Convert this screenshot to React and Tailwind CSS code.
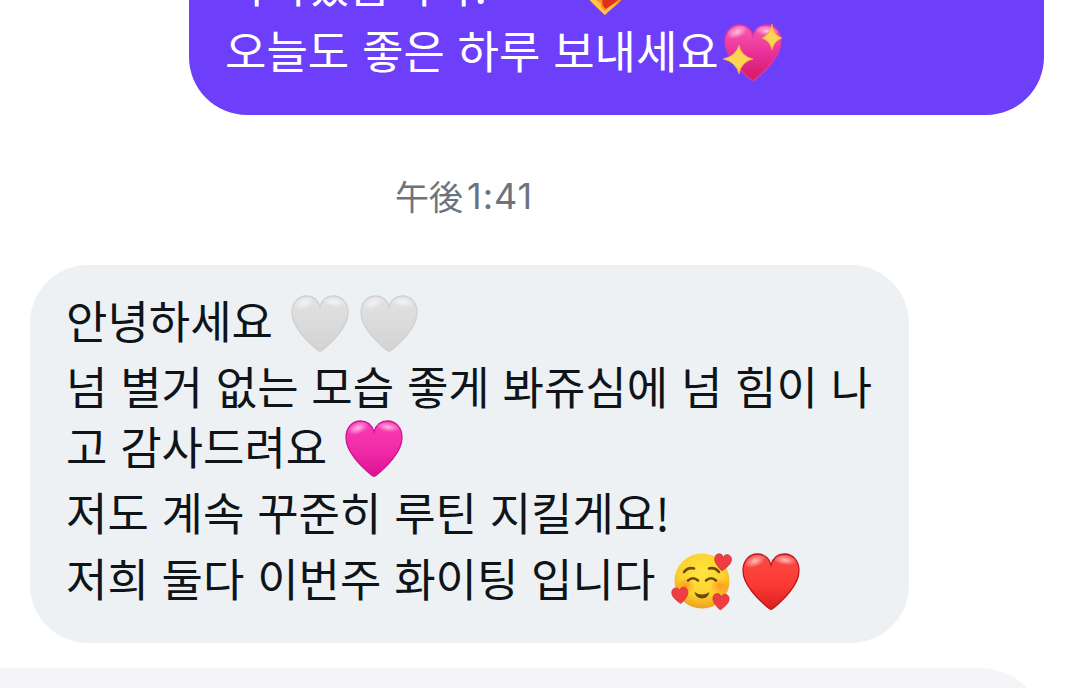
import React from 'react';

const HEART = "M29 56.5C27.5 56 17 47.5 10 38.5C4 31 1 25 1 17.5C1 8 7 1 15.5 1C22 1 27 5 29 12C31 5 36 1 42.5 1C51 1 57 8 57 17.5C57 25 54 31 48 38.5C41 47.5 30.5 56 29 56.5Z";

const HEART_COLORS = {
  white: { light: '#e2e2e3', base: '#dadadb', bottom: '#d3d3d4', edge: '#d0d0d2' },
  pink: { light: '#fb3cb4', base: '#f02aa6', bottom: '#dc0f94', edge: '#cf1592' },
  red: { light: '#fb4a42', base: '#fb3a34', bottom: '#dc1f22', edge: '#bd171d' },
  sparkle: { light: '#fb5cb0', base: '#e82c98', bottom: '#d21a5c', edge: '#e0389a' },
};

function Heart({ color, className, children }) {
  const c = HEART_COLORS[color];
  return (
    <svg viewBox="0 0 58 58" className={className || "w-[58px] h-[58px] shrink-0"}>
      <defs>
        <linearGradient id={`fill-${color}`} x1="0" y1="0" x2="0" y2="1">
          <stop offset="0" stopColor={c.light} />
          <stop offset="0.55" stopColor={c.base} />
          <stop offset="1" stopColor={c.bottom} />
        </linearGradient>
        <radialGradient id={`gloss-${color}`}>
          <stop offset="0" stopColor="#fff" stopOpacity="0.65" />
          <stop offset="1" stopColor="#fff" stopOpacity="0" />
        </radialGradient>
      </defs>
      <path d={HEART} fill={`url(#fill-${color})`} stroke={c.edge} strokeWidth="1.3" />
      <ellipse cx="13" cy="8" rx="11" ry="6" transform="rotate(-22 13 8)" fill={`url(#gloss-${color})`} />
      <ellipse cx="43" cy="7" rx="12" ry="5" transform="rotate(8 43 7)" fill={`url(#gloss-${color})`} />
      {children}
    </svg>
  );
}

function SparklingHeart() {
  return (
    <Heart color="sparkle" className="w-[58px] h-[58px] shrink-0 overflow-visible">
      <path d="M15 21Q17 32 29 35Q17 38 15 50Q12 38 -1 35Q12 32 15 21Z" fill="#fdd552" stroke="#f2a23c" strokeWidth="0.8" />
      <path d="M48 0Q49 11 58 14Q50 17 48 26Q46 17 38 14Q46 11 48 0Z" fill="#fdd552" stroke="#f2a23c" strokeWidth="0.8" />
    </Heart>
  );
}

function FireHeart() {
  return (
    <svg viewBox="0 0 58 58" className="w-[58px] h-[58px] shrink-0">
      <path d="M29 57C23 51 17 47 11 39L1 18L15 1L29 11L43 1L57 18L48 39C42 47 35 51 29 57Z" fill="#f7931e" />
      <path d="M30 51C26 48 25 44 28 37L34 28L40 34L44 39C41 45 35 47 30 51Z" fill="#e2301c" />
      <path d="M29 57C23 51 19 48 14 42L19 35C19 42 22 45 25 45C24 49 27 52 29 53C33 48 38 46 42 43C39 49 33 52 29 57Z" fill="#ffc44e" />
    </svg>
  );
}

function LoveFace() {
  return (
    <svg viewBox="0 0 62 60" className="w-[62px] h-[60px] shrink-0">
      <defs>
        <radialGradient id="face" cx="0.5" cy="0.35" r="0.65">
          <stop offset="0" stopColor="#ffe63f" />
          <stop offset="0.65" stopColor="#fdd02f" />
          <stop offset="1" stopColor="#eda01f" />
        </radialGradient>
        <radialGradient id="blush">
          <stop offset="0" stopColor="#fb7a1e" stopOpacity="0.65" />
          <stop offset="1" stopColor="#fb7a1e" stopOpacity="0" />
        </radialGradient>
      </defs>
      <circle cx="31" cy="29" r="27.5" fill="url(#face)" />
      <ellipse cx="14" cy="34" rx="10" ry="8" fill="url(#blush)" />
      <ellipse cx="49" cy="34" rx="10" ry="8" fill="url(#blush)" />
      <g fill="none" stroke="#6b4a10" strokeWidth="2.6" strokeLinecap="round">
        <path d="M13 20Q17 15 23 16.5" />
        <path d="M38 16.5Q44 15 48 20" />
        <path d="M17 28.5Q22 24 27 28.5" />
        <path d="M35 28.5Q40 24 45 28.5" />
      </g>
      <path d="M23.5 40Q31 45 38.5 40Q37 46.5 31 46.5Q25 46.5 23.5 40Z" fill="#6b4a10" />
      <g fill="#ee3d43" stroke="#c9252b" strokeWidth="2">
        <path d={HEART} transform="translate(44 1) rotate(6) scale(.3)" />
        <path d={HEART} transform="translate(0 36) rotate(-5) scale(.29)" />
        <path d={HEART} transform="translate(42 41) rotate(4) scale(.29)" />
      </g>
    </svg>
  );
}

function Line({ className, text, children }) {
  return (
    <div className={`flex items-center whitespace-pre ${className}`}>
      <span className="mb-[7px]">{text}</span>
      {children}
    </div>
  );
}

function SentBubble() {
  return (
    <div className="ml-[189px] w-[855px] h-[115px] shrink-0 flex flex-col justify-end overflow-hidden rounded-b-[58px] bg-[#6d3ffb] pl-[36px] pb-[29px] text-white">
      <Line className="h-[66px] shrink-0" text="바라겠습니다!">
        <div className="ml-[88px] flex"><FireHeart /></div>
      </Line>
      <Line className="h-[66px] shrink-0" text="오늘도 좋은 하루 보내세요">
        <div className="ml-[5px] flex"><SparklingHeart /></div>
      </Line>
    </div>
  );
}

function ReceivedBubble() {
  return (
    <div className="ml-[30px] mt-[35px] w-[879px] h-[378px] shrink-0 rounded-[58px] bg-[#edf1f4] pl-[36px] pt-[25px] text-[#0f1419]">
      <Line className="h-[66px]" text="안녕하세요">
        <div className="ml-[18px] mt-[1px] flex gap-[11px]">
          <Heart color="white" />
          <Heart color="white" />
        </div>
      </Line>
      <Line className="h-[66px]" text="넘 별거 없는 모습 좋게 봐쥬심에 넘 힘이 나" />
      <Line className="h-[53px]" text="고 감사드려요">
        <div className="ml-[18px] mt-[1px] flex"><Heart color="pink" /></div>
      </Line>
      <Line className="h-[79px]" text="저도 계속 꾸준히 루틴 지킬게요!" />
      <Line className="h-[53px]" text="저희 둘다 이번주 화이팅 입니다">
        <div className="ml-[16px] mt-[2px] flex items-center gap-[9px]">
          <LoveFace />
          <Heart color="red" />
        </div>
      </Line>
    </div>
  );
}

export default function App() {
  return (
    <div className="flex h-[688px] w-[1067px] flex-col overflow-hidden bg-white font-['Noto_Sans_CJK_KR',sans-serif] text-[45px] leading-none [word-spacing:2.7px]">
      <SentBubble />
      <div className="mt-[56px] mb-[9px] ml-[395px] flex h-[50px] shrink-0 items-center text-[#6c737d] text-[34px] [word-spacing:0px]">
        <span className="font-['Noto_Sans_CJK_JP',sans-serif]">午後</span>
        <span className="ml-[4px] font-[Inter,sans-serif] text-[36px] tracking-[1px]">1:41</span>
      </div>
      <ReceivedBubble />
      <div className="mt-[25px] h-[80px] w-[1046px] shrink-0 rounded-tr-[66px] bg-[#f5f5f7]" />
    </div>
  );
}
